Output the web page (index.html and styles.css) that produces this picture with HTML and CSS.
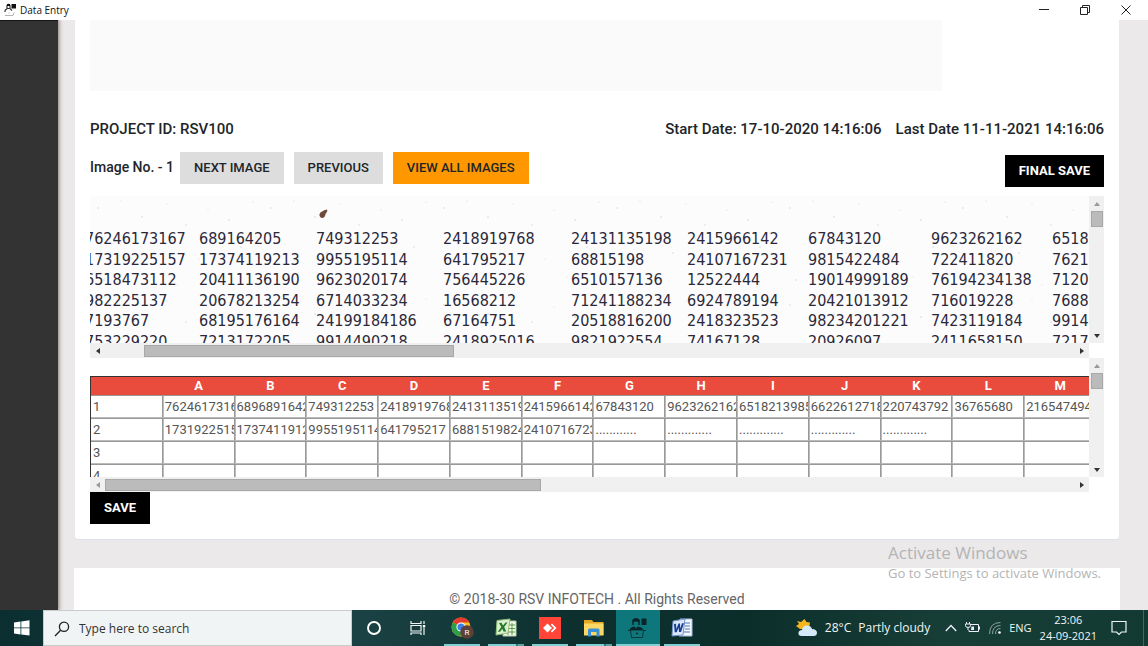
FILE: index.html
```html
<!DOCTYPE html>
<html lang="en">
<head>
<meta charset="utf-8">
<title>Data Entry</title>
<link rel="stylesheet" href="styles.css">
</head>
<body>
<header class="titlebar">
  <svg class="title-icon" viewBox="0 0 13 14" width="13" height="14"><path d="M3 5V2.500Q4.500.300 6 2.500V5M1 7.500L3 5.500H6L8 7.500M1 7.500V9" fill="none" stroke="#333" stroke-width="1.200"/><path d="M7.500 1H12V5.500H7.500zM3 1H6V3H3z" fill="#111"/><path d="M1 12.500H9L10 9.500" fill="none" stroke="#aaa" stroke-width=".9"/><circle cx="5" cy="10" r=".5" fill="#888"/></svg>
  <span class="title-text">Data Entry</span>
  <div class="window-controls">
    <button aria-label="Minimize"><svg width="10" height="10" viewBox="0 0 10 10"><path d="M0 4.500H10"/></svg></button>
    <button aria-label="Restore"><svg width="10" height="10" viewBox="0 0 10 10"><path d="M.500 2.500H7.500V9.500H.500zM2.500 2.500V.500H9.500V7.500H7.500"/></svg></button>
    <button aria-label="Close"><svg width="10" height="10" viewBox="0 0 10 10"><path d="M.500.500L9.500 9.500M9.500.500L.500 9.500"/></svg></button>
  </div>
</header>
<div class="app">
  <aside class="sidebar"></aside>
  <main class="content">
    <section class="card">
      <div class="placeholder"></div>
      <div class="info-row">
        <span>PROJECT ID: RSV100</span>
        <span class="dates"><span>Start Date: 17-10-2020 14:16:06</span><span>Last Date 11-11-2021 14:16:06</span></span>
      </div>
      <div class="action-row">
        <span class="image-no">Image No. - 1</span>
        <button class="btn btn-grey">NEXT IMAGE</button>
        <button class="btn btn-grey">PREVIOUS</button>
        <button class="btn btn-orange">VIEW ALL IMAGES</button>
        <button class="btn btn-black btn-final">FINAL SAVE</button>
      </div>

      <div class="pane scan-pane">
        <div class="view scan">
          <svg class="specks" width="100%" height="100%">
            <defs><pattern id="dust" width="173" height="97" patternUnits="userSpaceOnUse">
              <g fill="#cdd4da"><circle cx="8" cy="12" r=".7"/><circle cx="31" cy="5" r=".6"/><circle cx="52" cy="21" r=".8"/><circle cx="77" cy="8" r=".6"/><circle cx="96" cy="29" r=".7"/><circle cx="118" cy="14" r=".6"/><circle cx="139" cy="24" r=".8"/><circle cx="163" cy="6" r=".6"/><circle cx="22" cy="48" r=".6"/><circle cx="64" cy="57" r=".7"/><circle cx="109" cy="63" r=".6"/><circle cx="151" cy="51" r=".7"/><circle cx="14" cy="84" r=".7"/><circle cx="87" cy="89" r=".6"/><circle cx="131" cy="81" r=".6"/></g>
            </pattern></defs>
            <rect width="100%" height="100%" fill="url(#dust)"/>
            <path d="M229.500 18Q231 15 237 13.500Q238 15 235.500 18Q235 22 232 22Q229 21 229.500 18Z" fill="#6d4a3b"/>
          </svg>
          <div class="scan-grid">
            <span>76246173167</span><span>689164205</span><span>749312253</span><span>2418919768</span><span>24131135198</span><span>2415966142</span><span>67843120</span><span>9623262162</span><span>6518</span>
            <span>17319225157</span><span>17374119213</span><span>9955195114</span><span>641795217</span><span>68815198</span><span>24107167231</span><span>9815422484</span><span>722411820</span><span>7621</span>
            <span>6518473112</span><span>20411136190</span><span>9623020174</span><span>756445226</span><span>6510157136</span><span>12522444</span><span>19014999189</span><span>76194234138</span><span>7120</span>
            <span>982225137</span><span>20678213254</span><span>6714033234</span><span>16568212</span><span>71241188234</span><span>6924789194</span><span>20421013912</span><span>716019228</span><span>7688</span>
            <span>7193767</span><span>68195176164</span><span>24199184186</span><span>67164751</span><span>20518816200</span><span>2418323523</span><span>98234201221</span><span>7423119184</span><span>9914</span>
            <span>753229220</span><span>7213172205</span><span>9914490218</span><span>2418925016</span><span>9821922554</span><span>74167128</span><span>20926097</span><span>2411658150</span><span>7217</span>
          </div>
        </div>
        <div class="vbar"><i class="arrow up off"></i><b class="thumb"></b><i class="arrow down"></i></div>
        <div class="hbar"><i class="arrow left"></i><span class="track"><b class="thumb scan-thumb"></b></span><i class="arrow right"></i></div>
      </div>

      <div class="pane sheet-pane">
        <div class="view sheet-view">
          <table class="sheet">
            <thead><tr><th></th><th>A</th><th>B</th><th>C</th><th>D</th><th>E</th><th>F</th><th>G</th><th>H</th><th>I</th><th>J</th><th>K</th><th>L</th><th>M</th></tr></thead>
            <tbody>
              <tr><td>1</td><td><input aria-label="A1" value="76246173167"></td><td><input aria-label="B1" value="68968916420"></td><td><input aria-label="C1" value="749312253"></td><td><input aria-label="D1" value="2418919768"></td><td><input aria-label="E1" value="24131135198"></td><td><input aria-label="F1" value="2415966142"></td><td><input aria-label="G1" value="67843120"></td><td><input aria-label="H1" value="9623262162"></td><td><input aria-label="I1" value="6518213985"></td><td><input aria-label="J1" value="6622612718"></td><td><input aria-label="K1" value="220743792"></td><td><input aria-label="L1" value="36765680"></td><td><input aria-label="M1" value="216547494"></td></tr>
              <tr><td>2</td><td><input aria-label="A2" value="17319225157"></td><td><input aria-label="B2" value="17374119121"></td><td><input aria-label="C2" value="9955195114"></td><td><input aria-label="D2" value="641795217"></td><td><input aria-label="E2" value="6881519824"></td><td><input aria-label="F2" value="24107167231"></td><td><input aria-label="G2" value="............"></td><td><input aria-label="H2" value="............."></td><td><input aria-label="I2" value="............."></td><td><input aria-label="J2" value="............."></td><td><input aria-label="K2" value="............."></td><td><input aria-label="L2"></td><td><input aria-label="M2"></td></tr>
              <tr><td>3</td><td></td><td></td><td></td><td></td><td></td><td></td><td></td><td></td><td></td><td></td><td></td><td></td><td></td></tr>
              <tr><td>4</td><td></td><td></td><td></td><td></td><td></td><td></td><td></td><td></td><td></td><td></td><td></td><td></td><td></td></tr>
            </tbody>
          </table>
        </div>
        <div class="vbar"><i class="arrow up off"></i><b class="thumb"></b><i class="arrow down"></i></div>
        <div class="hbar"><i class="arrow left off"></i><span class="track"><b class="thumb sheet-thumb"></b></span><i class="arrow right"></i></div>
      </div>
      <button class="btn btn-black">SAVE</button>
    </section>
    <footer class="footer">© 2018-30 RSV INFOTECH . All Rights Reserved</footer>
  </main>
  <div class="watermark"><p class="wm-title">Activate Windows</p><p class="wm-sub">Go to Settings to activate Windows.</p></div>
</div>
<nav class="taskbar">
  <button class="start" aria-label="Start"><svg width="16" height="16" viewBox="0 0 16 16" fill="#fff"><path d="M0 2.400L6.500 1.500V7.500H0zM7.300 1.400L15.500.300V7.500H7.300zM0 8.300H6.500V14.400L0 13.500zM7.300 8.300H15.500V15.600L7.300 14.500z"/></svg></button>
  <label class="search">
    <svg width="16" height="16" viewBox="0 0 16 16" fill="none" stroke="#222" stroke-width="1.300"><circle cx="10" cy="5.800" r="4.600"/><path d="M6.600 9.200L1 15"/></svg>
    <input type="text" placeholder="Type here to search" aria-label="Type here to search">
  </label>
  <div class="tasks">
    <button aria-label="Cortana"><svg width="16" height="16" viewBox="0 0 16 16"><circle cx="8" cy="8" r="6" fill="none" stroke="#fff" stroke-width="1.900"/></svg></button>
    <button aria-label="Task view"><svg width="16" height="16" viewBox="0 0 16 16" fill="none" stroke="#f2f5f5" stroke-width="1.200"><path d="M1 1V3.500H11V1M1 5.500H11V11H1zM1 15V13H11V15M14 1V4M14 8V15"/><path d="M12.800 5H15.200V7.500H12.800z" fill="#fff" stroke="none"/></svg></button>
    <button class="open" aria-label="Chrome"><svg width="24" height="24" viewBox="0 0 24 24"><circle cx="11" cy="11" r="9.500" fill="#fbc116"/><path d="M11 11L2.800 6.300A9.500 9.500 0 0 1 19.500 6.500H11z" fill="#e33b2e"/><path d="M2.800 6.300A9.500 9.500 0 0 0 10 20.400L14 13z" fill="#2c9f4b"/><circle cx="11" cy="11" r="4.600" fill="#fff"/><circle cx="11" cy="11" r="3.600" fill="#3f7fe8"/><circle cx="17" cy="16" r="6.800" fill="#5d4037"/><text x="17" y="19" text-anchor="middle" class="badge-letter">R</text></svg></button>
    <button class="open split" aria-label="Excel"><svg width="22" height="20" viewBox="0 0 22 20"><path d="M9 3H21V18H8z" fill="#f4f8ef" stroke="#b4cfa5"/><path d="M13 5V17M17 5V17M10 7H20M10 10.500H20M10 14H20" stroke="#5a9c45"/><path d="M2 2.500L15 1L13 15L1 17z" fill="#dcefcf" stroke="#8fbf78"/><path d="M4 5L6.500 4.800L8 7.500L10.500 4.400H12.500L9.200 9L11.200 13.500H8.500L7.300 10.700L5 13.800H2.800L6.300 9z" fill="#227b2b"/></svg></button>
    <button class="open" aria-label="AnyDesk"><svg width="22" height="22" viewBox="0 0 22 22"><path fill="#ff4438" d="M0 0H22V22H0z"/><path d="M8.500 6.500L13 11L8.500 15.500L4 11z" fill="#fff"/><path d="M11.800 7.700L13 6.500L17.500 11L13 15.500L11.800 14.300L15 11z" fill="#fff"/></svg></button>
    <button class="open split" aria-label="File Explorer"><svg width="20" height="18" viewBox="0 0 20 18"><path d="M0 1H8L9.500 3H19.500V16H0z" fill="#e5a724"/><path d="M0 4.500H19.500V16.500H0z" fill="#fbd766"/><path d="M4 17.500V11Q4 9.500 5.500 9.500H14Q15.500 9.500 15.500 11V17.500H12.500V13H7V17.500z" fill="#3a91d8"/></svg></button>
    <button class="open active" aria-label="Data Entry"><svg width="20" height="22" viewBox="0 0 20 22"><path d="M5 8V4.500Q5 2 8 2T11 4.500V8" fill="none" stroke="#0a2529" stroke-width="1.400"/><path d="M4.500 5V3Q8-.500 11.500 3V5L9 4.500zM13.500 1.500H18.500V8H13.500zM1.500 13Q2 10.500 4.500 10L6.500 9.500L8 11.500L9.500 9.500L12 10Q14.500 10.500 15 13z" fill="#0a2529"/><path d="M2.500 13H15.500L14.500 20.500H3.500zM0 13.500H2M16 13.500H18" fill="none" stroke="#0a2529" stroke-width=".8"/><circle cx="9" cy="16.500" r="1" fill="#0a2529"/></svg></button>
    <button class="open" aria-label="Word"><svg width="22" height="20" viewBox="0 0 22 20"><path d="M9 1H21V18H8z" fill="#f5f8fd" stroke="#a5bbdf"/><path d="M14 5H19M14 8H19M14 11H19M13 14H19" stroke="#4877be"/><path d="M2 3L14 1L12 17L1 18z" fill="#dce7f8" stroke="#6f92cc"/><path d="M3 6L5 5.800L5.300 11L7.500 5.500H9L9.300 10.500L11 5.200H13L10 14H8L7.600 9.500L5.700 14.200H3.700z" fill="#173f91"/></svg></button>
  </div>
  <div class="tray">
    <div class="weather"><svg width="22" height="18" viewBox="0 0 22 18"><path d="M8.500 0L10.500 3L14 3.500L13 10H4L0 7L3 5L1 2L5 3z" fill="#f6b51b"/><path d="M5 17Q2 16.500 2.500 13.500Q3 11 6 11Q6.500 6.500 11 6.500Q15 6.500 16 10Q20.500 10 21 13.500Q21 17 17.500 17z" fill="#d4eaf8"/></svg><span>28°C</span><span>Partly cloudy</span></div>
    <div class="status">
      <svg width="12" height="8" viewBox="0 0 12 8" fill="none" stroke="#eef" stroke-width="1.300"><path d="M.800 7L6 1.500L11.200 7"/></svg>
      <svg width="16" height="12" viewBox="0 0 16 12" fill="none" stroke="#eef"><path d="M5.500 2.500H13.500V9.500H4V8M14.500 4.500V7.500M1.500 0V2M4.500 0V2M.500 2H5.500V3.500Q5.500 5.500 3 5.500Q.500 5.500.500 3.500zM3 5.500V8"/><path d="M6.500 4.500H9V8H6z" fill="#eef" stroke="none"/></svg>
      <svg width="12" height="12" viewBox="0 0 12 12" fill="none" stroke="#8ba39f"><path d="M.500 12Q.500.500 11.500.500M3.500 12Q3.500 3.500 11.500 3.500M6.500 12Q6.500 6.500 11.500 6.500"/><circle cx="10.500" cy="10.500" r="1.300" fill="#fff" stroke="none"/></svg>
      <span>ENG</span>
    </div>
    <div class="clock"><span>23:06</span><span>24-09-2021</span></div>
    <button class="notif" aria-label="Notifications"><svg width="16" height="16" viewBox="0 0 16 16" fill="none" stroke="#f2f5f5" stroke-width="1.200"><path d="M1 1.500H15V12H10.500L8 14.500L5.500 12H1z"/></svg></button>
  </div>
</nav>
</body>
</html>
```
FILE: styles.css
```css
* { box-sizing: border-box; }
body {
  margin: 0;
  height: 100vh;
  display: flex;
  flex-direction: column;
  overflow: hidden;
  font-family: Roboto, "Liberation Sans", sans-serif;
  color: #212529;
  background: #fff;
}
button { border: 0; padding: 0; background: none; font: inherit; color: inherit; }
button, svg { display: block; flex: none; }

.titlebar {
  flex: none;
  height: 20px;
  display: flex;
  align-items: center;
  gap: 3px;
  padding: 0 2px 0 4px;
  background: #fff;
  color: #111;
  font: 10px/20px "Open Sans", "Noto Sans", sans-serif;
}
.window-controls { margin-left: auto; display: flex; }
.window-controls button { width: 41px; height: 18px; display: grid; place-items: center; }
.window-controls svg { fill: none; stroke: #222; }

.app { flex: 1; min-height: 0; display: flex; overflow: hidden; position: relative; background: #ebe9ea; }
.sidebar { flex: none; width: 58px; background: #333; border-top: 1px solid #151515; box-shadow: 0 0 4px 1px #8b7a70; }
.content { flex: 1; min-width: 0; padding: 0 29px 0 17px; }
.card {
  padding: 0 15px 15px;
  background: #fff;
  border-radius: 0 0 3px 3px;
  box-shadow: 0 1px 1px #dde0e5;
}
.placeholder { width: 84%; height: 71px; background: #fafafa; }
.info-row { margin-top: 28px; display: flex; justify-content: space-between; font-size: 15px; line-height: 20px; font-weight: 500; }
.dates { display: flex; gap: 14px; }
.action-row { margin-top: 13px; height: 35px; display: flex; align-items: flex-start; gap: 10px; }
.image-no { margin-right: -4px; font-size: 14px; line-height: 30px; font-weight: 500; }
.btn { height: 32px; padding: 0 14px; font-size: 13px; line-height: 32px; font-weight: 500; white-space: nowrap; }
.btn-grey { background: #ddd; }
.btn-orange { background: #ff9800; }
.btn-black { background: #000; color: #fff; font-weight: 700; }
.btn-final { margin-left: auto; align-self: flex-end; }

.pane { display: grid; grid-template-columns: minmax(0, 1fr) 15px; }
.scan-pane { margin-top: 9px; grid-template-rows: 147px 15px; }
.sheet-pane { grid-template-rows: 119px 15px; }
.view { overflow: hidden; position: relative; }
.vbar, .hbar { display: flex; align-items: center; background: #f0f0f0; }
.vbar { flex-direction: column; }
.arrow { flex: none; width: 15px; height: 15px; display: grid; place-items: center; color: #333; }
.off { color: #999; }
.arrow::before { content: ""; border: 3px solid transparent; }
.up::before { border-bottom: 4px solid; border-top: 0; }
.down::before { border-top: 4px solid; border-bottom: 0; }
.left::before { border-right: 4px solid; border-left: 0; }
.right::before { border-left: 4px solid; border-right: 0; }
.down { margin-top: auto; }
.thumb { display: block; background: #bbb; border: 1px solid #a8a8a8; }
.vbar .thumb { width: 12px; height: 16px; }
.track { flex: 1; }
.hbar .thumb { height: 12px; }
.scan-thumb { width: 32%; margin-left: 4%; }
.sheet-thumb { width: 45%; }

.scan { background: #fcfcfd; }
.specks { position: absolute; inset: 0; }
.scan-grid {
  position: relative;
  display: grid;
  grid-template-columns: 114px 117px 127px 128px 116px 121px 123px 121px 38px;
  grid-template-rows: repeat(6, 1fr);
  height: 123px;
  margin: 33px 0 0 -5px;
  font: 16px/20px "DejaVu Sans Condensed", "Noto Sans", sans-serif;
  color: #2b2838;
  white-space: nowrap;
}

.sheet-view { padding-top: 18px; }
.sheet { width: 1006px; table-layout: fixed; border-collapse: separate; border-spacing: 0; border-top: 1px solid #333; border-left: 1px solid #333; font-size: 13px; }
.sheet th { height: 18px; padding: 0; background: #e94b3c; color: #fff; line-height: 18px; }
.sheet td { height: 23px; padding: 0 0 0 2px; border: 1px solid #999; border-width: 1px 1px 1px 0; border-bottom-color: #bbb; box-shadow: 1px 0 #bbb; color: #555; line-height: 20px; }
.sheet input { display: block; width: 100%; height: 20px; padding: 0; border: 0; background: none; font: inherit; color: inherit; }

.footer { margin: 29px -1px 0; padding: 21px 0 24px; background: #fff; color: #666; font-size: 14px; line-height: 20px; text-align: center; }
.watermark { position: absolute; right: 47px; bottom: 27px; color: #b4b4b4; font-family: "Open Sans", "Noto Sans", sans-serif; white-space: nowrap; }
.watermark p { margin: 0; line-height: 20px; }
.wm-title { font-size: 17px; }
.wm-sub { font-size: 13px; }

.taskbar { flex: none; height: 36px; display: flex; background: linear-gradient(90deg, #0b2f31, #1a4143 32%, #0d2f2e 50%, #0c2e2b 65%, #173e36 82%, #123a33); color: #f2f5f5; font: 12px/16px "Open Sans", "Noto Sans", sans-serif; }
.start { width: 43px; display: grid; place-items: center; }
.search { flex: 0 1 309px; display: flex; align-items: center; gap: 9px; padding: 1px 10px 0; background: #f1f4f4; border: 1px solid #c8cccc; }
.search input { flex: 1; min-width: 0; padding: 0; border: 0; outline: 0; background: none; font: inherit; }
.search input::placeholder { color: #333; opacity: 1; }
.tasks { display: flex; }
.tasks button { width: 44px; display: grid; place-items: center; }
.tasks .open { background: linear-gradient(#7fd0d2, #7fd0d2) 50% 100% / 36px 2px no-repeat; }
.tasks .split { background: linear-gradient(90deg, #7fd0d2 28px, #3a7474 28px, #3a7474 30px, #5ba3a3 30px) 50% 100% / 36px 2px no-repeat; }
.tasks .active { background: linear-gradient(#7fd0d2, #7fd0d2) 50% 100% / 44px 2px no-repeat, #0d777b; }
.badge-letter { font: 8px Roboto, sans-serif; fill: #fff; }
.tray { margin-left: auto; display: flex; align-items: center; padding-right: 16px; border-right: 1px solid #49645e; margin-right: 4px; }
.weather { display: flex; align-items: center; gap: 7px; }
.status { display: flex; align-items: center; gap: 8px; margin-left: 15px; font-size: 11px; }
.clock { display: grid; margin: 0 14px 0 8px; text-align: center; font-size: 11px; }
```
